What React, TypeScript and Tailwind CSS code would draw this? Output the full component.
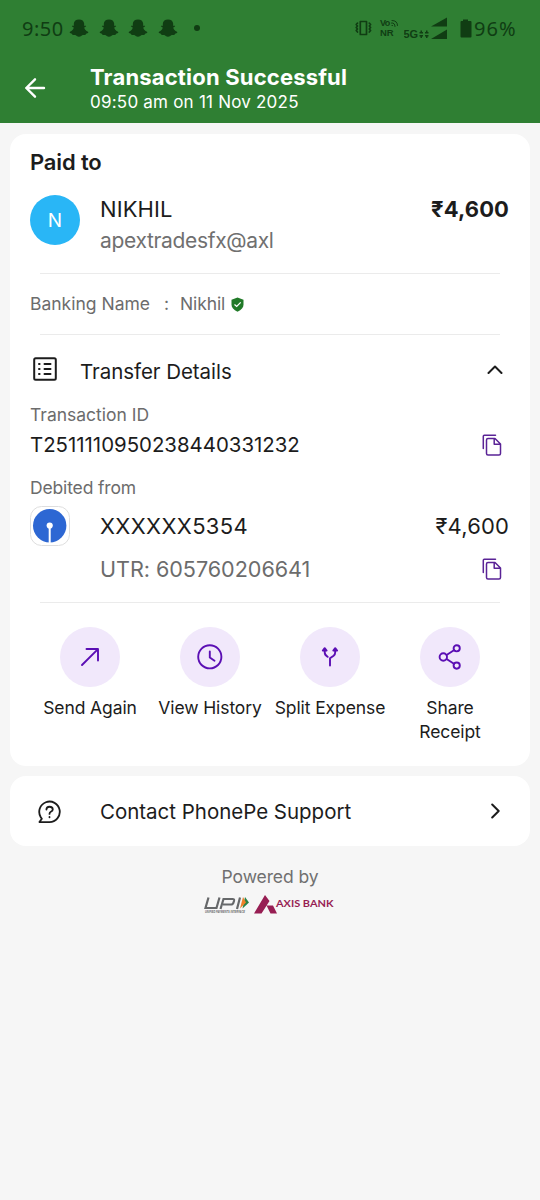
import type { ReactNode } from "react";

const stroke = {
  fill: "none",
  stroke: "currentColor",
  strokeLinecap: "round",
  strokeLinejoin: "round",
} as const;

function Ghost() {
  return (
    <svg className="h-[19px] w-5" viewBox="0 0 20 19" fill="currentColor">
      <path d="M10 .5c3 0 5 1.600 5.200 4.200l-.1 2.100c.9-.2 1.900-.3 2 .3.100.7-1.100 1.100-1.900 1.500.5 2.100 1.700 3.400 3.800 4.200.8.4.3 1.500-1.900 1.900-.5.200-.3 1.100-.8 1.200-.9.100-1.700-.2-2.600.2-1 .6-1.900 1.600-3.700 1.600s-2.700-1-3.700-1.600c-.9-.4-1.700-.1-2.600-.2-.5-.1-.3-1-.8-1.200-2.200-.4-2.700-1.500-1.900-1.900 2.100-.8 3.300-2.100 3.800-4.200-.8-.4-2-.8-1.900-1.500.1-.6 1.100-.5 2-.3l-.1-2.100C5 2.100 7 .5 10 .5Z" />
    </svg>
  );
}

function StatusBar() {
  return (
    <div className="flex h-14 items-center pl-[22px] pr-[22px] text-[#103d13]">
      <span className="w-[47px] whitespace-nowrap pt-0.5 font-['Noto_Sans',sans-serif] text-[20px] leading-none tracking-[0.5px]">9:50</span>
      <div className="flex gap-[9.500px]">
        {[0, 1, 2, 3].map((n) => (
          <Ghost key={n} />
        ))}
      </div>
      <span className="ml-4 h-1.5 w-1.5 rounded-full bg-current" />
      <div className="ml-auto flex items-center">
        <svg className="h-[18px] w-[18px]" viewBox="0 0 18 18" {...stroke} strokeWidth="1.700">
          <path d="M6.300 2.500h6.200v13H6.300zM3.500 4.200 2.200 5.500 3.500 7 2.200 8.500 3.500 10 2.200 11.500 3.500 13 M15.300 4.200l1.300 1.300L15.300 7l1.300 1.500-1.300 1.500 1.300 1.500-1.300 1.500" />
        </svg>
        <div className="ml-[8px] w-5 font-['Liberation_Sans',sans-serif] text-[9.500px] font-bold leading-[9px]">
          <div className="flex">
            <span className="w-[11px] text-[9px] tracking-[-0.5px]">Vo</span>
            <svg className="mt-px h-[7px] w-[7px]" viewBox="0 0 7 7" {...stroke} strokeWidth="1">
              <path d="M.5 3Q4 2.500 4 6.500M1 .5Q6.500.5 6.500 5.500M1 5.500h.5" />
            </svg>
          </div>
          <div>NR</div>
        </div>
        <svg className="ml-[4px] h-[23px] w-[43px]" viewBox="0 0 43 23" fill="currentColor">
          <text x="-.5" y="20.500" fontSize="11" fontWeight="700" fontFamily="Liberation Sans">5G</text>
          <path d="M27 9.500 43 .5v9zM27 22l16-9.500V22z" />
          <path d="M16.500 13.500H18V15h1v1.500h-3.500V15h1zM22 13.500h1.500V15h1v1.500H21V15h1zM15.500 18H19v1.500h-1V21h-1.500v-1.500h-1zM21 18h3.500v1.500h-1V21H22v-1.500h-1z" />
        </svg>
        <svg className="ml-[13px] h-[19px] w-[12px]" viewBox="0 0 12 19" fill="currentColor">
          <path d="M3 2V.5h5V2h2.500q1 0 1 1v14.500q0 1-1 1H1.500q-1 0-1-1V3q0-1 1-1z" />
        </svg>
        <span className="ml-[2px] w-[44px] whitespace-nowrap pt-0.5 font-['Noto_Sans',sans-serif] text-[20px] leading-none tracking-[1px]">96%</span>
      </div>
    </div>
  );
}

function CopyIcon() {
  return (
    <svg className="h-6 w-5 text-[#5a2396]" viewBox="0 0 20 24" {...stroke} strokeWidth="1.500">
      <path d="M1.300 15.500V3.300q0-1 1-1H13.500" />
      <path d="M6 5.500h7l5.500 5.500v9.500q0 1.500-1.500 1.500H6q-1.500 0-1.500-1.500V7q0-1.500 1.500-1.500ZM12.200 5.500v5.800h6.300" />
    </svg>
  );
}

function Divider() {
  return <div className="mx-[10px] h-px bg-[#ebebeb]" />;
}

type ActionProps = { label: ReactNode; children: ReactNode };

function Action({ label, children }: ActionProps) {
  return (
    <div className="flex w-[120px] flex-col items-center">
      <div className="flex h-[60px] w-[60px] items-center justify-center rounded-full bg-[#f1e8fb] text-[#5b0fb4]">
        <svg className="h-8 w-8" viewBox="0 0 32 32" {...stroke} strokeWidth="1.900">
          {children}
        </svg>
      </div>
      <p className="mt-[9px] whitespace-nowrap text-center text-[17.500px] leading-6 tracking-[-0.1px]">{label}</p>
    </div>
  );
}

function Header() {
  return (
    <header className="h-[123px] bg-[#2f7f33]">
      <StatusBar />
      <div className="flex pl-6 text-white">
        <svg className="mt-[21px] h-[22px] w-[22px]" viewBox="0 0 22 22" {...stroke} strokeWidth="2.400">
          <path d="M20 11H2.300M11 2.300 2.300 11l8.700 8.700" />
        </svg>
        <div className="ml-[44px] pt-2">
          <h1 className="whitespace-nowrap text-[22px] font-bold leading-[26px] tracking-[0.18px]">Transaction Successful</h1>
          <p className="whitespace-nowrap text-[17px] leading-6 tracking-[0.22px]">09:50 am on 11 Nov 2025</p>
        </div>
      </div>
    </header>
  );
}

function PaymentCard() {
  return (
    <section className="mx-[10px] mt-[11px] h-[632px] rounded-[16px] bg-white px-5 pt-[14px]">
      <h2 className="h-7 text-[22px] font-semibold leading-7 tracking-[-0.15px]">Paid to</h2>

      <div className="mt-[19px] flex h-[78px]">
        <div className="flex h-[50px] w-[50px] items-center justify-center rounded-full bg-[#29b6f6] pt-[3px] text-[19px] text-white">N</div>
        <div className="ml-5 whitespace-nowrap">
          <p className="text-[22px] leading-[29px] tracking-[0.1px]">NIKHIL</p>
          <p className="mt-[2px] text-[21px] leading-[30px] tracking-[-0.33px] text-[#707070]">apextradesfx@axl</p>
        </div>
        <p className="ml-auto mr-px text-[22px] font-bold leading-[29px] tracking-[0.1px]">₹4,600</p>
      </div>
      <Divider />

      <div className="flex h-[60px] items-center whitespace-nowrap text-[17.500px] text-[#6c6c6c]">
        <span className="w-[134px]">Banking Name</span>
        <span className="w-4">:</span>
        <span className="tracking-[-0.1px]">Nikhil</span>
        <svg className="ml-[6px] h-[15px] w-[13px]" viewBox="0 0 13 15">
          <path d="M6.500.5 12.500 2.700v5q0 4-6 7-6-3-6-7v-5z" fill="#217a28" />
          <path d="m3.500 7.400 2.200 2 4-4" fill="none" stroke="#fff" strokeWidth="1.300" />
        </svg>
      </div>
      <Divider />

      <div className="flex h-[68px] items-center">
        <svg className="ml-[3px] h-6 w-6" viewBox="0 0 24 24" {...stroke} strokeWidth="2">
          <rect x="1.200" y="1.200" width="21.600" height="21.600" rx="1.500" />
          <path d="M6 7h.6M6 12h.6M6 17h.6M11.500 7h6M11.500 12h6M11.500 17h6" />
        </svg>
        <span className="ml-[23px] pt-[6px] text-[20.500px] tracking-[-0.05px]">Transfer Details</span>
        <svg className="ml-auto mr-[7px] h-[9px] w-4" viewBox="0 0 16 9" {...stroke} strokeWidth="2">
          <path d="m1.500 8 6.500-6.500L14.500 8" />
        </svg>
      </div>

      <p className="h-6 text-[17.500px] leading-6 text-[#6c6c6c]">Transaction ID</p>
      <div className="flex h-9 items-center justify-between">
        <span className="text-[20.400px]">T2511110950238440331232</span>
        <span className="mr-2">
          <CopyIcon />
        </span>
      </div>

      <p className="mt-[13px] h-6 text-[17.500px] leading-6 tracking-[-0.15px] text-[#6c6c6c]">Debited from</p>
      <div className="mt-[6px] flex h-10 items-center">
        <svg className="h-10 w-10" viewBox="0 0 40 40">
          <rect x=".5" y=".5" width="39" height="39" rx="11" fill="#fff" stroke="#dedede" />
          <circle cx="19.700" cy="19.700" r="16.700" fill="#2d67d3" />
          <circle cx="19.700" cy="19.500" r="3.100" fill="#fff" />
          <path d="M19.700 20v17" stroke="#fff" strokeWidth="2" />
        </svg>
        <span className="ml-[30px] text-[22px] tracking-[0.35px]">XXXXXX5354</span>
        <span className="ml-auto mr-px text-[22px] tracking-[0.15px]">₹4,600</span>
      </div>
      <div className="mt-1 flex h-[38px] items-center justify-between pl-[70px]">
        <span className="text-[21.600px] tracking-[-0.05px] text-[#6c6c6c]">UTR: 605760206641</span>
        <span className="mr-2">
          <CopyIcon />
        </span>
      </div>
      <div className="mt-[14px]">
        <Divider />
      </div>

      <div className="mt-[24px] flex">
        <Action label="Send Again">
          <path d="M8 24 23.700 8.300M12.500 8H24v11.500" />
        </Action>
        <Action label="View History">
          <circle cx="15.800" cy="15.800" r="11.600" />
          <path d="M15.800 10.500v6l4.700 3.200" />
        </Action>
        <Action label="Split Expense">
          <path d="M16 24.500v-7.200l3.600-2.500q1.600-1.200 1.600-3.500V8M13.700 15.800q-3-1.500-3-4.500V8" />
          <path d="m8.800 9.500 1.900-2.300 1.900 2.300zM19.300 9.500l1.900-2.300 1.900 2.300z" fill="currentColor" />
        </Action>
        <Action
          label={
            <>
              Share
              <br />
              Receipt
            </>
          }
        >
          <circle cx="9.300" cy="16" r="3.700" />
          <circle cx="22.700" cy="7.300" r="3.100" />
          <circle cx="22.700" cy="24.600" r="3.100" />
          <path d="m12.600 14 7.300-4.700M12.600 18l7.300 4.800" />
        </Action>
      </div>
    </section>
  );
}

function SupportCard() {
  return (
    <section className="mx-[10px] mt-[10px] flex h-[70px] items-center rounded-[16px] bg-white pl-[28px] pr-[30px]">
      <svg className="mt-px h-6 w-[23px]" viewBox="0 0 24 24" {...stroke} strokeWidth="1.900">
        <path d="M1.500 22.500h10.500A10.700 10.700 0 1 0 2.900 17.400L4 19z" />
        <path d="M8.800 9.500q0-3 3.200-3 3.400 0 3.400 2.800 0 1.500-2 2.500-1.400.7-1.400 2.200M12 17.200v.3" />
      </svg>
      <span className="ml-[39px] pt-0.5 text-[20.500px] tracking-[-0.02px]">Contact PhonePe Support</span>
      <svg className="ml-auto h-4 w-[9px]" viewBox="0 0 9 16" {...stroke} strokeWidth="2">
        <path d="m1.200 1.500 6.500 6.500-6.500 6.500" />
      </svg>
    </section>
  );
}

function PoweredBy() {
  return (
    <footer className="flex flex-col items-center pt-[18px]">
      <p className="text-[17.500px] leading-[26px] tracking-[-0.1px] text-[#707070]">Powered by</p>
      <div className="mt-[4px] flex">
        <svg className="h-5 w-[46px]" viewBox="0 0 46 20" fill="none">
          <path d="M4.500 3.500 1.500 14h11l3-10.500M16.500 15l3-10h9q2 0 1.500 2l-.5 1.500q-.5 2-2.500 2h-8M33 15 36 3.500" stroke="#66686a" strokeWidth="2.200" />
          <path d="m41 3 4 5.500-6.500 6z" fill="#2a8348" />
          <path d="m39 3 3 5.500-6 6z" fill="#ee8128" />
          <text x="1" y="18.500" fontSize="3" fontWeight="700" fontStyle="italic" fontFamily="Liberation Sans" fill="#66686a" textLength="40" lengthAdjust="spacingAndGlyphs">UNIFIED PAYMENTS INTERFACE</text>
        </svg>
        <svg className="ml-1 h-5 w-[82px]" viewBox="0 0 82 20" fill="#971e53">
          <path d="M11 1 0 19.500h7.500L15.500 7zM12.500 11.500H19l4 8h-6.500z" />
          <text x="22" y="13" fontSize="10" fontWeight="700" fontFamily="Lato" textLength="57.500" lengthAdjust="spacingAndGlyphs">AXIS BANK</text>
        </svg>
      </div>
    </footer>
  );
}

export default function App() {
  return (
    <main className="h-[1200px] w-[540px] overflow-hidden bg-[#f6f6f6] font-['Inter',sans-serif] text-[#1c1c1c]">
      <Header />
      <PaymentCard />
      <SupportCard />
      <PoweredBy />
    </main>
  );
}
